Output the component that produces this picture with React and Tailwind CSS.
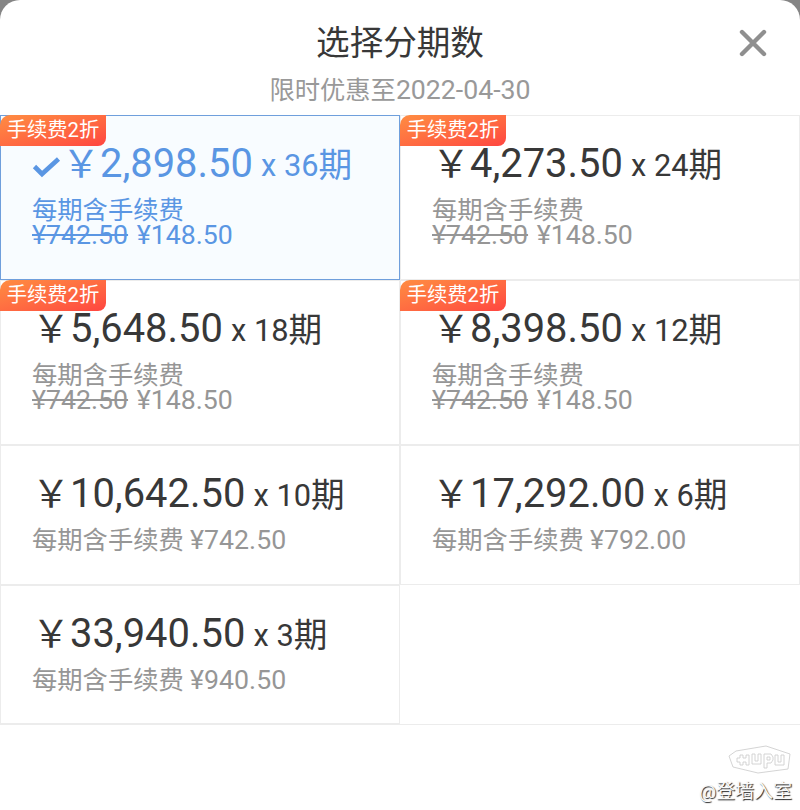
import React from 'react';

const plans = [
  { price: '2,898.50', count: 36, oldFee: '742.50', fee: '148.50', selected: true },
  { price: '4,273.50', count: 24, oldFee: '742.50', fee: '148.50' },
  { price: '5,648.50', count: 18, oldFee: '742.50', fee: '148.50' },
  { price: '8,398.50', count: 12, oldFee: '742.50', fee: '148.50' },
  { price: '10,642.50', count: 10, fee: '742.50' },
  { price: '17,292.00', count: 6, fee: '792.00' },
  { price: '33,940.50', count: 3, fee: '940.50' },
];

const PlanCard = ({ plan }) => {
  const color = plan.selected
    ? 'border-[#6f9fdc] bg-[#f8fcff] text-[#5a96e3]'
    : 'border-[#ececec] bg-white text-[#383838]';
  const feeColor = plan.selected ? 'text-[#5a96e3]' : 'text-[#969696]';

  return (
    <div className={`relative border pl-[31px] ${plan.oldFee ? 'h-[165px]' : 'h-[139.5px]'} ${color}`}>
      {plan.oldFee && (
        <span className="absolute -left-px -top-px flex h-[31px] w-[106px] items-center justify-center rounded-tl-[10px] rounded-br-[8px] bg-linear-to-br from-[#ff8c42] to-[#ff4440] pb-[1px] text-[20.3px] leading-none text-white">
          手续费2折
        </span>
      )}
      <div className="flex h-[64px] items-baseline whitespace-pre pt-[18px]">
        {plan.selected && (
          <svg className="relative top-[1px] mr-[1px] h-[22px] w-[29px]" viewBox="0 0 29 22">
            <path d="M2.5 10.5 L10 18 L26.5 3" fill="none" stroke="#5a96e3" strokeWidth="4.6" />
          </svg>
        )}
        <span className="text-[38px] leading-[60px]">￥</span>
        <span className="text-[39.9px] leading-[60px]">{plan.price}</span>
        <span className="relative -top-px ml-[0.5px] text-[30.8px] leading-[60px]"> x {plan.count}</span>
        <span className="text-[33.6px] leading-[60px]">期</span>
      </div>
      <div className={`whitespace-pre pt-[18px] text-[25.3px] leading-[25px] ${feeColor}`}>
        每期含手续费
        {plan.oldFee ? <br /> : ' '}
        <span className="text-[26.7px]">
          {plan.oldFee && <s className="mr-[2px]">¥{plan.oldFee}</s>}
          {plan.oldFee && ' '}
          ¥{plan.fee}
        </span>
      </div>
    </div>
  );
};

const Watermark = () => (
  <div className="flex flex-col items-end pr-[8px] pt-[19px]">
    <svg className="h-[31px] w-[64px]" viewBox="0 0 64 31" fill="none" stroke="#cfcfcf" strokeWidth="0.9">
      <path d="M8 7 L38 2 L62 10 L60 25 L30 29 L5 23 L1 12 Z" />
      <path d="M9 14 h3 v-3 h3 v3 h3 v-3 h3 v10 h-3 v-3 h-3 v3 h-3 v-3 h-3 Z" />
      <path d="M24 10 h3 v7 h3 v-7 h3 v10 h-9 Z M36 10 h7 l2 3 v3 l-2 3 h-4 v5 h-3 Z M39 13 h3 v3 h-3 Z M47 11 h3 v7 h3 v-7 h3 v10 h-9 Z" />
    </svg>
    <div className="mt-[5px] text-[19px] leading-[24px] text-[#fafafa] [text-shadow:1px_1px_1px_#222]">@登墙入室</div>
  </div>
);

const App = () => {
  return (
    <div className="h-[810px] overflow-hidden bg-[#858585] font-['Roboto','Noto_Sans_CJK_SC',sans-serif]">
      <div className="h-full rounded-t-[20px] bg-white">
        <div className="relative h-[115px] pt-[19px] text-center">
          <h1 className="text-[33.6px] leading-[50px] text-[#383838]">选择分期数</h1>
          <p className="pt-[3px] text-[25.3px] leading-[36px] text-[#999999]">
            限时优惠至<span className="text-[26.7px]">2022-04-30</span>
          </p>
          <svg className="absolute right-[32px] top-[28px] h-[30px] w-[30px]" viewBox="0 0 30 30">
            <path d="M4 4 L26 26 M26 4 L4 26" stroke="#8f8f8f" strokeWidth="4.4" strokeLinecap="round" />
          </svg>
        </div>
        <div className="grid grid-cols-2 border-b border-[#ececec]">
          {plans.map((plan) => (
            <PlanCard key={plan.count} plan={plan} />
          ))}
        </div>
        <Watermark />
      </div>
    </div>
  );
};

export default App;
